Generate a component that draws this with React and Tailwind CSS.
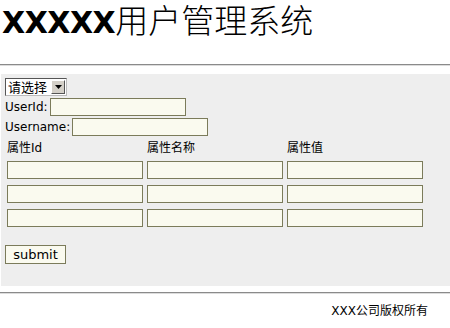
export default function App() {
  const rows = [0, 1, 2];
  const cols = [0, 1, 2];

  return (
    <div className="w-[450px] h-[328px] bg-white text-black overflow-hidden font-['DejaVu_Sans','Noto_Sans_CJK_SC',sans-serif]">
      {/* Header */}
      <div className="h-[64px] pl-[2px] flex items-start">
        <h1 className="flex items-baseline leading-[40px] -mt-[1px]">
          <span className="font-bold text-[30px] tracking-[-0.5px]">XXXXX</span>
          <span className="text-[33px] font-light font-['Noto_Sans_CJK_SC',sans-serif] leading-[40px]">用户管理系统</span>
        </h1>
      </div>
      <div className="h-[2px] border-t border-[#8a8a8a] border-b border-b-[#dcdcdc]" />

      {/* Form panel */}
      <div className="mt-[8px] ml-[1px] h-[212px] bg-[#eeeeee] pl-[4px] pt-[4px] text-[12px] leading-[18px]">
        <div className="w-[62px] h-[18px] flex items-center justify-between border border-[#555] border-r-[#bbb] border-b-[#bbb] bg-white pl-[2px] pr-[1px]">
          <span className="font-['Noto_Sans_CJK_SC',sans-serif] text-[13px] leading-[16px]">请选择</span>
          <span className="w-[14px] h-[14px] bg-[#d4d0c8] border border-[#fff] border-r-[#555] border-b-[#555] flex items-center justify-center">
            <svg width="7" height="4" viewBox="0 0 7 4"><path d="M0 0h7L3.5 4z" fill="#000" /></svg>
          </span>
        </div>

        <div className="mt-[2px] flex items-center h-[18px]">
          <span>UserId:</span>
          <input className="ml-[2px] w-[136px] h-[18px] bg-[#fafaef] border border-[#7b7b5a] outline-none" />
        </div>
        <div className="mt-[2px] flex items-center h-[18px]">
          <span>Username:</span>
          <input className="ml-[2px] w-[136px] h-[18px] bg-[#fafaef] border border-[#7b7b5a] outline-none" />
        </div>

        <div className="ml-[2px] mt-[3px] grid grid-cols-[136px_136px_136px] gap-x-[4px] gap-y-[6px]">
          <div className="h-[18px] leading-[18px]">属性Id</div>
          <div className="h-[18px] leading-[18px]">属性名称</div>
          <div className="h-[18px] leading-[18px]">属性值</div>
          {rows.map((r) =>
            cols.map((c) => (
              <input
                key={`${r}-${c}`}
                className={`h-[18px] bg-[#fafaef] border border-[#7b7b5a] outline-none ${r === 0 ? '-mt-[2px]' : ''}`}
              />
            ))
          )}
        </div>

        <button className="mt-[18px] w-[61px] h-[19px] bg-[#fafaef] border border-[#7b7b5a] text-[13px] leading-[17px] text-center">
          submit
        </button>
      </div>

      <div className="mt-[6px] h-[2px] border-t border-[#8a8a8a] border-b border-b-[#dcdcdc]" />

      {/* Footer */}
      <div className="pr-[22px] mt-[9px] text-right text-[12px] leading-[16px]">XXX公司版权所有</div>
    </div>
  );
}
